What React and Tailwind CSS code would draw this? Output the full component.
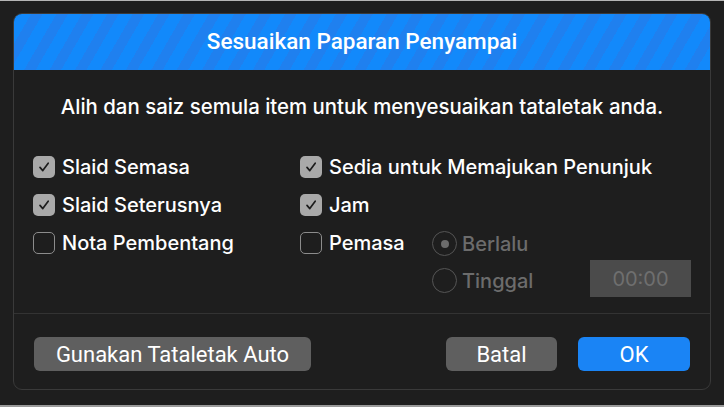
import React from 'react';

const Check = ({ checked }) => (
  <span
    className={
      'flex h-[22px] w-[22px] shrink-0 items-center justify-center rounded-[5px] ' +
      (checked ? 'bg-[#a9a9a9]' : 'border-[1.5px] border-[#8c8c8c]')
    }
  >
    {checked && (
      <svg width="14" height="14" viewBox="0 0 14 14" fill="none">
        <path d="M3 7.4 L5.8 10.6 L11.2 3.2" stroke="#1c1c1c" strokeWidth="1.7" strokeLinecap="round" strokeLinejoin="round" />
      </svg>
    )}
  </span>
);

const CheckRow = ({ checked, label }) => (
  <div className="flex h-[38px] items-center gap-[7px]">
    <Check checked={checked} />
    <span className="text-[20px] font-medium text-white">{label}</span>
  </div>
);

const Radio = ({ on, label }) => (
  <div className="flex h-[37px] items-center gap-[5px]">
    <span className="flex h-[25px] w-[25px] items-center justify-center rounded-full border-[1.5px] border-[#555]">
      {on && <span className="h-[8px] w-[8px] rounded-full bg-[#6c6c6c]" />}
    </span>
    <span className="text-[20px] font-medium text-[#6c6c6c]">{label}</span>
  </div>
);

export default function App() {
  return (
    <div className="h-[407px] w-[724px] overflow-hidden border-t border-b-2 border-t-[#b5b5b5] border-b-[#9a9a9a] bg-[#1e1e1e] pl-[13px] pt-[12px] font-['Inter',sans-serif]">
      <div className="flex h-[377px] w-[698px] flex-col overflow-hidden rounded-[9px] border border-[#3a3a3a] bg-[#1e1e1e]">
        <div className="flex h-[56px] shrink-0 items-center justify-center bg-[repeating-linear-gradient(-60deg,#1289fb_0px,#1289fb_12px,#1f80ef_12px,#1f80ef_22px)]">
          <span className="font-['Roboto',sans-serif] text-[22.5px] font-medium text-white">Sesuaikan Paparan Penyampai</span>
        </div>

        <div className="flex flex-1 flex-col">
          <p className="pt-[25px] text-center text-[20.4px] font-medium leading-[24px] text-white">
            Alih dan saiz semula item untuk menyesuaikan tataletak anda.
          </p>

          <div className="mt-[29px] flex pl-[19px]">
            <div className="flex w-[267px] flex-col">
              <CheckRow checked label="Slaid Semasa" />
              <CheckRow checked label="Slaid Seterusnya" />
              <CheckRow label="Nota Pembentang" />
            </div>
            <div className="flex flex-col">
              <CheckRow checked label="Sedia untuk Memajukan Penunjuk" />
              <CheckRow checked label="Jam" />
              <div className="flex">
                <div className="w-[132px]">
                  <CheckRow label="Pemasa" />
                </div>
                <div className="mt-[1px] flex w-[158px] flex-col">
                  <Radio on label="Berlalu" />
                  <Radio label="Tinggal" />
                </div>
                <div className="mt-[36px] flex h-[37px] w-[101px] items-center justify-center bg-[#4b4b4b] text-[20px] text-[#6f6f6f]">
                  00:00
                </div>
              </div>
            </div>
          </div>
        </div>

        <div className="flex h-[76px] shrink-0 items-start border-t border-[#333] px-[20px] pt-[23px] font-['Roboto',sans-serif] text-[22px] font-normal text-white">
          <button className="h-[34px] w-[277px] rounded-[6px] bg-[#5f5f5f]">Gunakan Tataletak Auto</button>
          <button className="ml-auto h-[34px] w-[111px] rounded-[6px] bg-[#5f5f5f]">Batal</button>
          <button className="ml-[21px] h-[34px] w-[112px] rounded-[6px] bg-[#1a84f5]">OK</button>
        </div>
      </div>
    </div>
  );
}
